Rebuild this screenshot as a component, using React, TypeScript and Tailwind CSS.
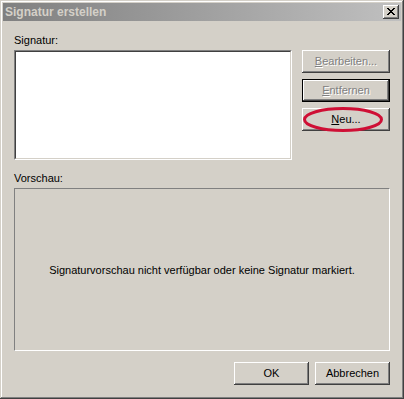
import React from 'react';

const raised =
  'shadow-[inset_-1px_-1px_#404040,inset_1px_1px_#ffffff,inset_-2px_-2px_#808080,inset_2px_2px_#d4d0c8]';

function WinButton({
  label,
  hot,
  disabled,
  isDefault,
  className = '',
}: {
  label: string;
  hot: string;
  disabled?: boolean;
  isDefault?: boolean;
  className?: string;
}) {
  const rest = label.slice(hot.length);
  return (
    <div
      className={`flex h-[23px] items-center justify-center bg-[#d4d0c8] text-[11px] ${
        isDefault ? 'border border-black' : ''
      } ${className}`}
    >
      <div
        className={`flex h-full w-full items-center justify-center ${raised} ${
          disabled ? 'text-[#808080] [text-shadow:1px_1px_0_#ffffff]' : 'text-black'
        }`}
      >
        <span>
          {hot && <u className="underline-offset-[1px]">{hot}</u>}
          {rest}
        </span>
      </div>
    </div>
  );
}

export default function App() {
  return (
    <div
      className="flex h-[399px] w-[404px] flex-col bg-[#d4d0c8] p-[3px] text-black shadow-[inset_-1px_-1px_#404040,inset_1px_1px_#d4d0c8,inset_-2px_-2px_#808080,inset_2px_2px_#ffffff]"
      style={{ fontFamily: '"Liberation Sans", Arial, sans-serif' }}
    >
      {/* title bar (inactive) */}
      <div className="flex h-[18px] items-center justify-between bg-gradient-to-r from-[#808080] to-[#c0c0c0] pl-[2px] pr-[2px]">
        <span className="text-[12px] font-bold leading-none text-[#d4d0c8]">Signatur erstellen</span>
        <div className={`flex h-[14px] w-[16px] items-center justify-center bg-[#d4d0c8] ${raised}`}>
          <svg width="8" height="7" viewBox="0 0 8 7" className="-mt-[1px]">
            <path d="M0 0h2v1h1v1h2V1h1V0h2v1H7v1H6v1H5v1h1v1h1v1h1v1H6V6H5V5H3v1H2v1H0V6h1V5h1V4h1V3H2V2H1V1H0z" fill="#000" />
          </svg>
        </div>
      </div>

      <div className="flex flex-1 flex-col px-[11px] pt-[13px] text-[11px] leading-[13px]">
        <div>Signatur:</div>
        <div className="mt-[3px] flex gap-[10px]">
          <div className="h-[110px] w-[278px] border-b border-l border-r border-t border-b-white border-l-[#808080] border-r-white border-t-[#808080] bg-white">
            <div className="h-full w-full border-b border-l border-r border-t border-b-[#d4d0c8] border-l-[#404040] border-r-[#d4d0c8] border-t-[#404040]" />
          </div>
          <div className="flex w-[88px] flex-col gap-[6px]">
            <WinButton label="Bearbeiten..." hot="B" disabled />
            <WinButton label="Entfernen" hot="E" disabled isDefault />
            <div className="relative">
              <WinButton label="Neu..." hot="N" />
              <svg
                className="pointer-events-none absolute left-[1px] top-[-1px]"
                width="80"
                height="25"
                viewBox="0 0 80 25"
              >
                <ellipse cx="40" cy="12.5" rx="38.5" ry="11" fill="none" stroke="#cf0f35" strokeWidth="3" />
              </svg>
            </div>
          </div>
        </div>

        <div className="mt-[12px]">Vorschau:</div>
        <div className="mt-[3px] flex h-[163px] w-[376px] items-center justify-center border-b border-l border-r border-t border-b-white border-l-[#808080] border-r-white border-t-[#808080]">
          <span className="pt-[2px]">Signaturvorschau nicht verfügbar oder keine Signatur markiert.</span>
        </div>

        <div className="mt-[11px] flex justify-end gap-[6px]">
          <WinButton label="OK" hot="" className="w-[75px]" />
          <WinButton label="Abbrechen" hot="" className="w-[75px]" />
        </div>
      </div>
    </div>
  );
}
